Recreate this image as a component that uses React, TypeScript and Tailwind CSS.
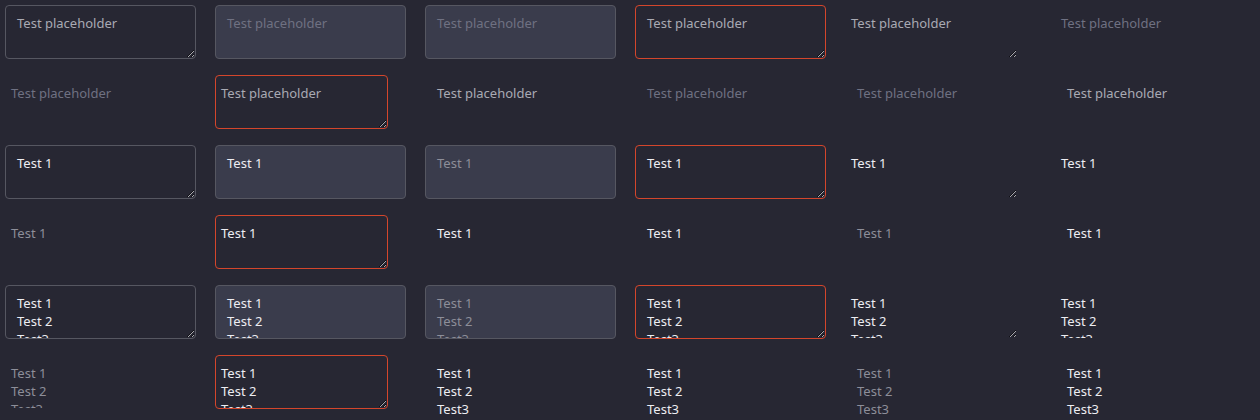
import React from "react";

type Cell = {
  box: string;
  text: string;
  ph: string;
};

const base =
  "block [color-scheme:dark] overflow-hidden font-['Noto_Sans',sans-serif] text-[13px] leading-[18px] outline-none rounded-[4px] border";

// top row of each pair: bordered / filled variants
const rowA: Cell[] = [
  { box: "w-[191px] h-[54px] px-[11px] pt-[8px] border-[#565761] bg-[#272733] resize", text: "text-[#ededf2]", ph: "placeholder:text-[#a9aab3]" },
  { box: "w-[191px] h-[54px] px-[11px] pt-[8px] border-[#565761] bg-[#3a3c4c] resize-none", text: "text-[#ededf2]", ph: "placeholder:text-[#6f7182]" },
  { box: "w-[191px] h-[54px] px-[11px] pt-[8px] border-[#565761] bg-[#3a3c4c] resize-none", text: "text-[#8d8e99]", ph: "placeholder:text-[#6f7182]" },
  { box: "w-[191px] h-[54px] px-[11px] pt-[8px] border-[#d4462c] bg-[#272733] resize", text: "text-[#ededf2]", ph: "placeholder:text-[#a9aab3]" },
  { box: "w-[173px] h-[54px] px-[5px] pt-[8px] border-transparent bg-transparent resize", text: "text-[#ededf2]", ph: "placeholder:text-[#a9aab3]" },
  { box: "w-[173px] h-[54px] px-[5px] pt-[8px] border-transparent bg-transparent resize-none", text: "text-[#ededf2]", ph: "placeholder:text-[#6f7182]" },
];

const rowB: Cell[] = [
  { box: "w-[173px] h-[54px] px-[5px] pt-[8px] border-transparent bg-transparent resize-none", text: "text-[#8d8e99]", ph: "placeholder:text-[#6f7182]" },
  { box: "w-[173px] h-[54px] px-[5px] pt-[8px] border-[#d4462c] bg-[#272733] resize", text: "text-[#ededf2]", ph: "placeholder:text-[#a9aab3]" },
  { box: "w-[191px] h-[70px] px-[11px] pt-[8px] border-transparent bg-transparent resize-none", text: "text-[#ededf2]", ph: "placeholder:text-[#a9aab3]" },
  { box: "w-[191px] h-[70px] px-[11px] pt-[8px] border-transparent bg-transparent resize-none", text: "text-[#ededf2]", ph: "placeholder:text-[#6f7182]" },
  { box: "w-[191px] h-[70px] px-[11px] pt-[8px] border-transparent bg-transparent resize-none", text: "text-[#8d8e99]", ph: "placeholder:text-[#6f7182]" },
  { box: "w-[191px] h-[70px] px-[11px] pt-[8px] border-transparent bg-transparent resize-none", text: "text-[#ededf2]", ph: "placeholder:text-[#a9aab3]" },
];

const values = ["", "Test 1", "Test 1\nTest 2\nTest3"];

function Field({ cell, value }: { cell: Cell; value: string }) {
  return (
    <div className="h-[70px] p-[5px]">
      <textarea
        readOnly
        placeholder={value ? undefined : "Test placeholder"}
        defaultValue={value}
        className={`${base} ${cell.box} ${cell.text} ${cell.ph}`}
      />
    </div>
  );
}

export default function App() {
  return (
    <div className="min-h-[420px] w-[1260px] bg-[#272733]">
      {values.map((v, i) => (
        <div key={i}>
          <div className="grid grid-cols-6">
            {rowA.map((c, j) => (
              <Field key={j} cell={c} value={v} />
            ))}
          </div>
          <div className="grid grid-cols-6">
            {rowB.map((c, j) => (
              <Field key={j} cell={c} value={v} />
            ))}
          </div>
        </div>
      ))}
    </div>
  );
}
